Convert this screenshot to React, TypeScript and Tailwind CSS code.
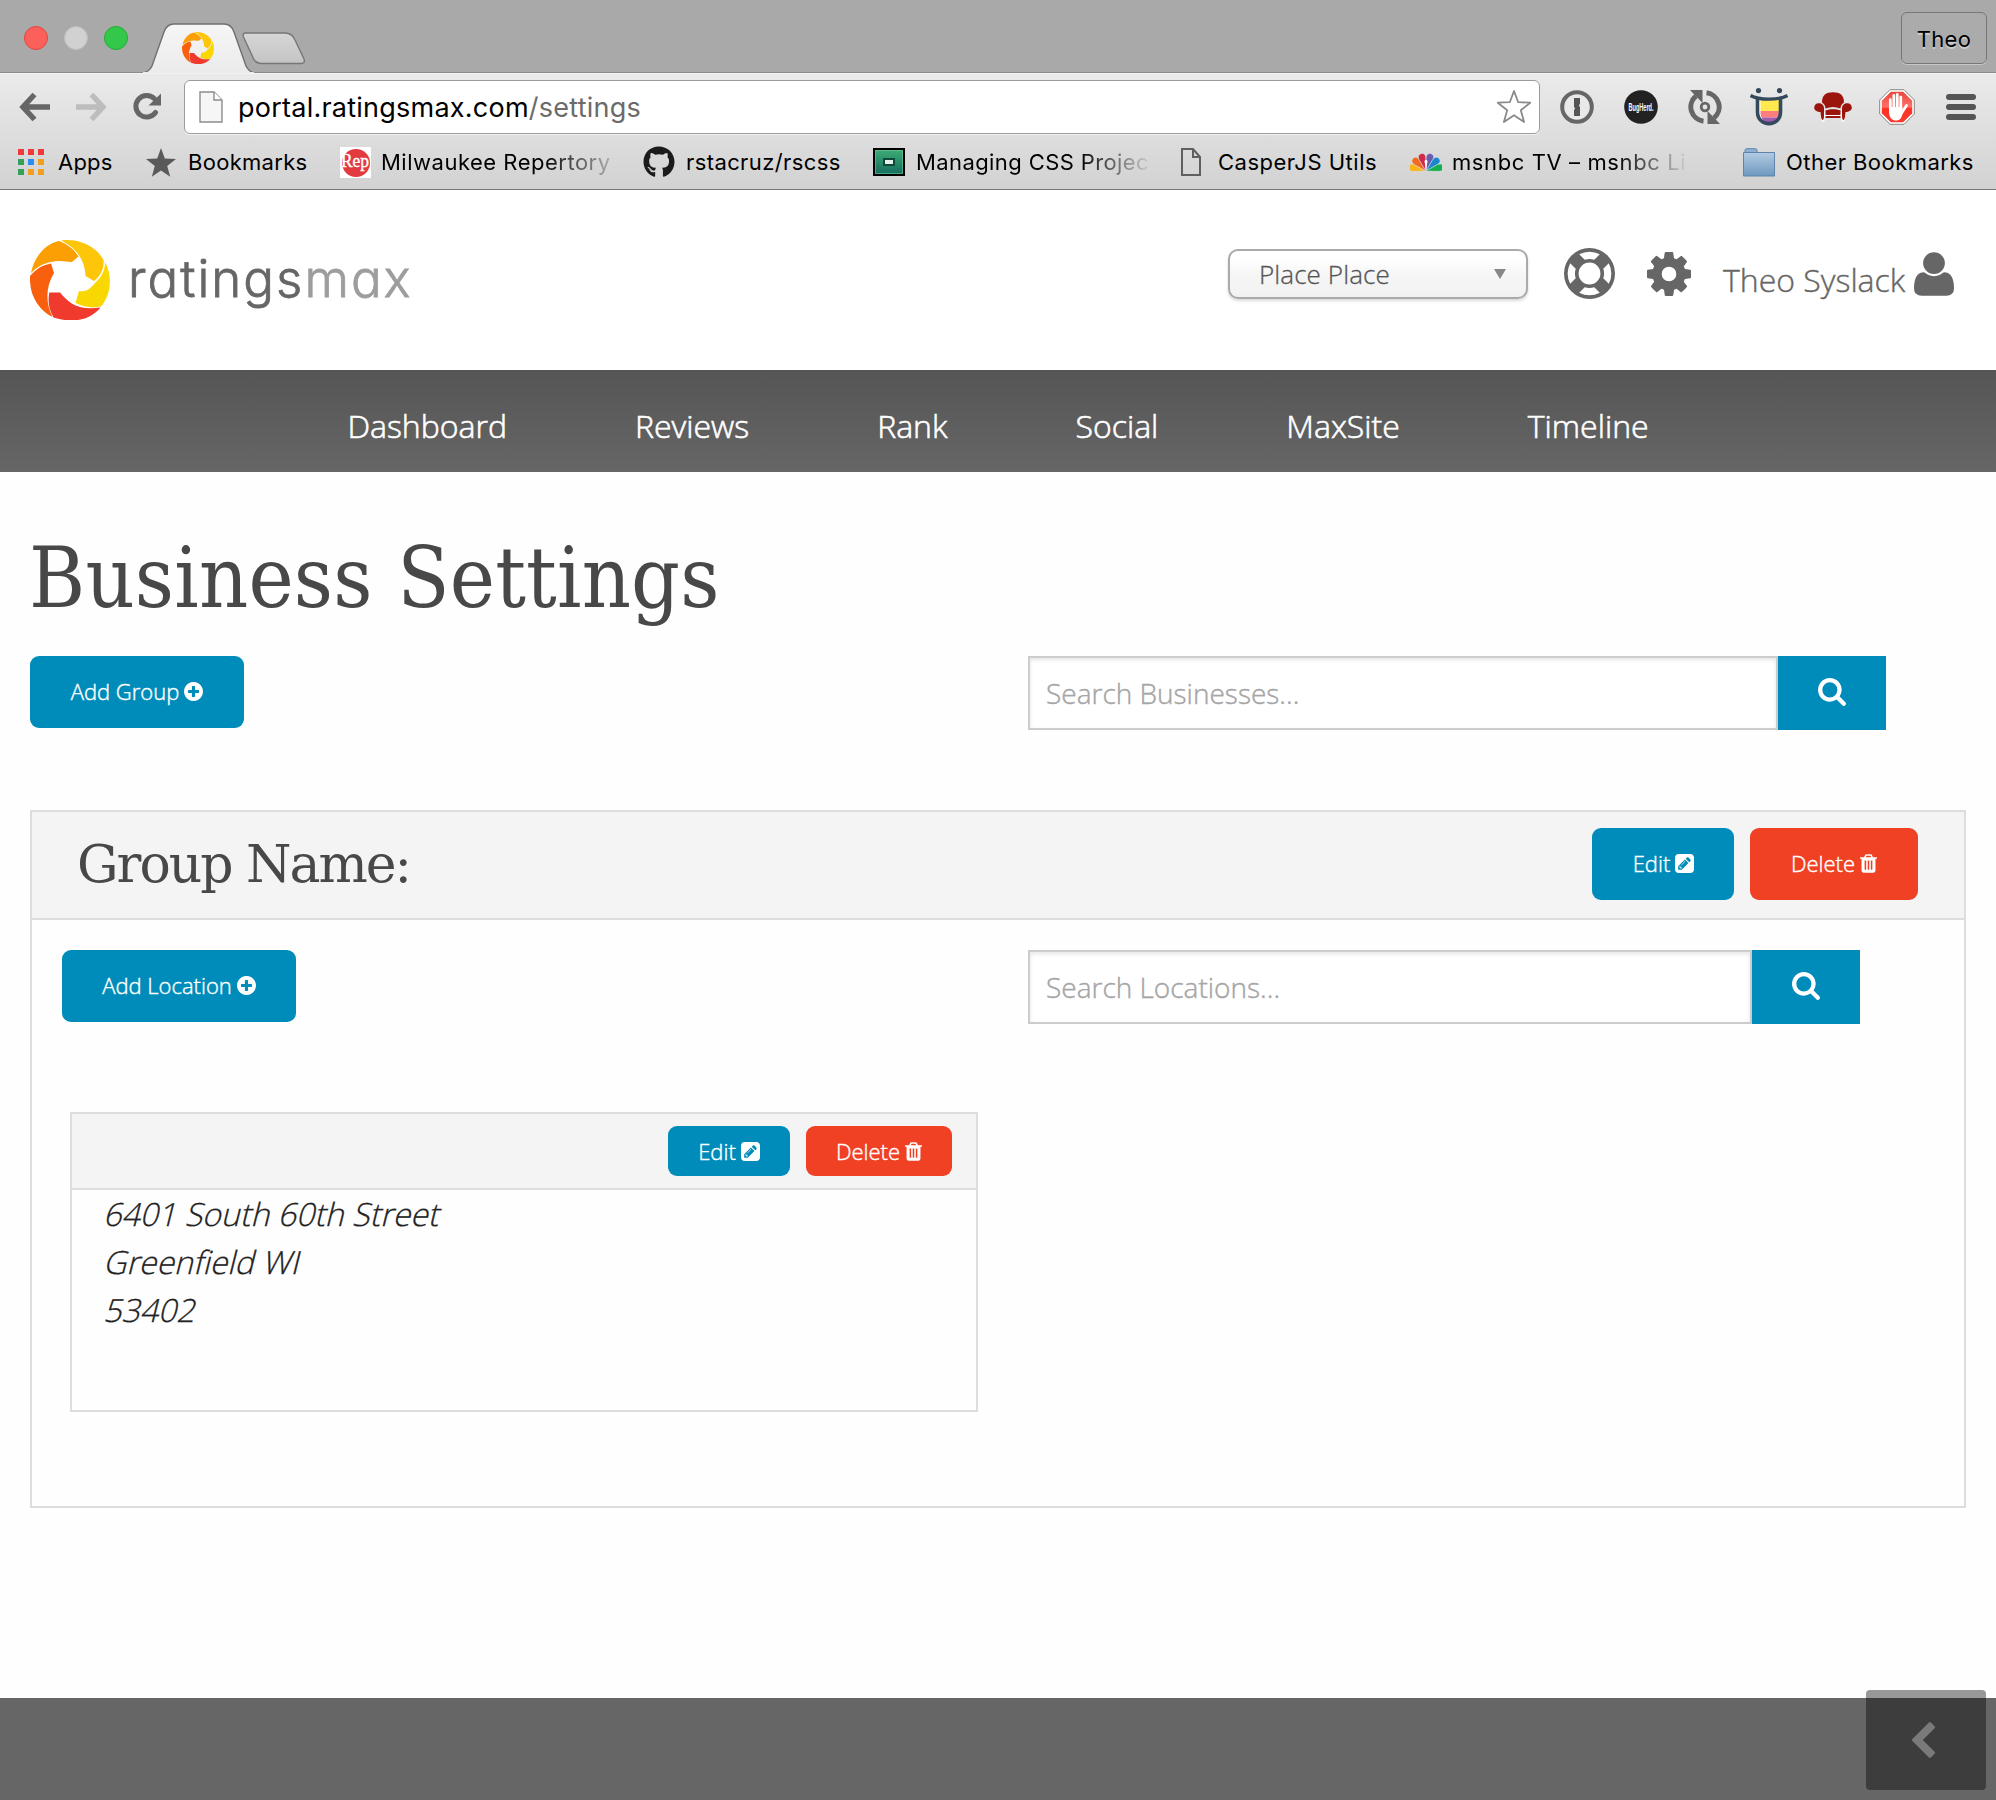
import type { ReactNode } from "react";
import { FaGithub } from "react-icons/fa";

const LIFE_RING =
  "M896 0q182 0 348 71t286 191 191 286 71 348-71 348-191 286-286 191-348 71-348-71-286-191-191-286-71-348 71-348 191-286 286-191 348-71zm0 128q-190 0-361 90l194 194q82-28 167-28t167 28l194-194q-171-90-361-90zm-678 1129l194-194q-28-82-28-167t28-167l-194-194q-90 171-90 361t90 361zm678 407q190 0 361-90l-194-194q-82 28-167 28t-167-28l-194 194q171 90 361 90zm0-384q159 0 271.5-112.5t112.5-271.5-112.5-271.5-271.5-112.5-271.5 112.5-112.5 271.5 112.5 271.5 271.5 112.5zm484-217l194 194q90-171 90-361t-90-361l-194 194q28 82 28 167t-28 167z";
const COG =
  "M1152 896q0-106-75-181t-181-75-181 75-75 181 75 181 181 75 181-75 75-181zm512-109v222q0 12-8 23t-20 13l-185 28q-19 54-39 91 35 50 107 138 10 12 10 25t-9 23q-27 37-99 108t-94 71q-12 0-26-9l-138-108q-44 23-91 38-16 136-29 186-7 28-36 28h-222q-14 0-24.5-8.5t-11.5-21.5l-28-184q-49-16-90-37l-141 107q-10 9-25 9-14 0-25-11-126-114-165-168-7-10-7-23 0-12 8-23 15-21 51-66.5t54-70.5q-27-50-41-99l-183-27q-13-2-21-12.5t-8-23.5v-222q0-12 8-23t19-13l186-28q14-46 39-92-40-57-107-138-10-12-10-24 0-10 9-23 26-36 98.5-107.5t94.5-71.5q13 0 26 10l138 107q44-23 91-38 16-136 29-186 7-28 36-28h222q14 0 24.5 8.5t11.5 21.5l28 184q49 16 90 37l142-107q9-9 24-9 13 0 25 10 129 119 165 170 7 8 7 22 0 12-8 23-15 21-51 66.5t-54 70.5q26 50 41 98l183 28q13 2 21 12.5t8 23.5z";
const USER =
  "M1600 1405q0 120-73 189.5t-194 69.5h-874q-121 0-194-69.5t-73-189.5q0-53 3.5-103.5t14-109 26.5-108.5 43-97.5 62-81 85.5-53.5 111.5-20q9 0 42 21.5t74.5 48 108 48 133.5 21.5 133.5-21.5 108-48 74.5-48 42-21.5q61 0 111.5 20t85.5 53.5 62 81 43 97.5 26.5 108.5 14 109 3.5 103.5zm-320-893q0 159-112.5 271.5t-271.5 112.5-271.5-112.5-112.5-271.5 112.5-271.5 271.5-112.5 271.5 112.5 112.5 271.5z";
const PLUS =
  "M1344 960v-128q0-26-19-45t-45-19h-256v-256q0-26-19-45t-45-19h-128q-26 0-45 19t-19 45v256h-256q-26 0-45 19t-19 45v128q0 26 19 45t45 19h256v256q0 26 19 45t45 19h128q26 0 45-19t19-45v-256h256q26 0 45-19t19-45zm320-64q0 209-103 385.5t-279.5 279.5-385.5 103-385.5-103-279.5-279.5-103-385.5 103-385.5 279.5-279.5 385.5-103 385.5 103 279.5 279.5 103 385.5z";
const SEARCH =
  "M1216 832q0-185-131.5-316.5t-316.5-131.5-316.5 131.5-131.5 316.5 131.5 316.5 316.5 131.5 316.5-131.5 131.5-316.5zm512 832q0 52-38 90t-90 38q-54 0-90-38l-343-342q-179 124-399 124-143 0-273.5-55.5t-225-150-150-225-55.5-273.5 55.5-273.5 150-225 225-150 273.5-55.5 273.5 55.5 225 150 150 225 55.5 273.5q0 220-124 399l343 343q37 37 37 90z";
const PENCIL =
  "M404 1108l152 152-52 52h-56v-96h-96v-56zm414-390q14 13-3 30l-291 291q-17 17-30 3-14-13 3-30l291-291q17-17 30-3zm-274 690l544-544-288-288-544 544v288h288zm608-608l92-92q28-28 28-68t-28-68l-152-152q-28-28-68-28t-68 28l-92 92zm384-384v960q0 119-84.5 203.5t-203.5 84.5h-960q-119 0-203.5-84.5t-84.5-203.5v-960q0-119 84.5-203.5t203.5-84.5h960q119 0 203.5 84.5t84.5 203.5z";
const TRASH =
  "M704 1376v-704q0-14-9-23t-23-9h-64q-14 0-23 9t-9 23v704q0 14 9 23t23 9h64q14 0 23-9t9-23zm256 0v-704q0-14-9-23t-23-9h-64q-14 0-23 9t-9 23v704q0 14 9 23t23 9h64q14 0 23-9t9-23zm256 0v-704q0-14-9-23t-23-9h-64q-14 0-23 9t-9 23v704q0 14 9 23t23 9h64q14 0 23-9t9-23zm-544-992h448l-48-117q-7-9-17-11h-317q-10 2-17 11zm928 32v64q0 14-9 23t-23 9h-96v948q0 83-47 143.5t-113 60.5h-832q-66 0-113-58.5t-47-141.5v-952h-96q-14 0-23-9t-9-23v-64q0-14 9-23t23-9h309l70-167q15-37 54-63t79-26h320q40 0 79 26t54 63l70 167h309q14 0 23 9t9 23z";
const CHEVRON =
  "M1427 301l-531 531 531 531q19 19 19 45t-19 45l-166 166q-19 19-45 19t-45-19l-742-742q-19-19-19-45t19-45l742-742q19-19 45-19t45 19l166 166q19 19 19 45t-19 45z";

function Glyph({ d, box, className }: { d: string; box: string; className: string }) {
  return (
    <svg viewBox={box} className={`shrink-0 ${className}`} fill="currentColor">
      <path d={d} />
    </svg>
  );
}

function Swirl({ className }: { className: string }) {
  return (
    <svg viewBox="0 0 80 80" className={`shrink-0 ${className}`}>
      <path fill="#fb9f04" d="M1 33C4 17 15 4 29 1c8 3 15 8 19.500 15.500L42 22C36 22.500 31 19 17 23 10 25 5 29 1 33z" />
      <path fill="#fdc60b" d="M31 .6C48-2 66 6 73.600 20c.5 8-2 15-9.600 21l-8.500-5C55 21 47 8 31 .6z" />
      <path fill="#f8d800" d="M75 22C82 34 82 53 71.500 66c-8 3-18 1-26-3l3.500-12c7 1 10-1 16.500-8.500C72.500 36 75 30 75 22z" />
      <path fill="#f03a2e" d="M70.500 67.500C61 79.500 44 84 23.500 77.500 18 68 18 60 19.300 52.500H30C38 62 47 71 70.500 67.500z" />
      <path fill="#f8600e" d="M0 36c7-8 13-11 21-12.500l3 9.500C16 46 15 62 22.500 77 9 70-1 56 0 36z" />
    </svg>
  );
}

function TabStrip() {
  return (
    <div className="flex h-[72px] items-start bg-[#a9a9a9]">
      <div className="flex gap-4 pt-[26px] pl-6">
        <span className="size-6 rounded-full border border-[#e2463f] bg-[#fc605b]" />
        <span className="size-6 rounded-full border border-[#bdbdbd] bg-[#d1d1d1]" />
        <span className="size-6 rounded-full border border-[#1fac30] bg-[#34c84a]" />
      </div>
      <div className="relative ml-[14px] h-[73px] w-[170px]">
        <svg width="170" height="73" viewBox="0 0 170 73">
          <defs>
            <linearGradient id="tab" x1="0" y1="0" x2="0" y2="1">
              <stop offset="0" stopColor="#f6f6f6" />
              <stop offset="1" stopColor="#ebebeb" />
            </linearGradient>
            <linearGradient id="newtab" x1="0" y1="0" x2="0" y2="1">
              <stop offset="0" stopColor="#d6d6d6" />
              <stop offset="1" stopColor="#c4c4c4" />
            </linearGradient>
          </defs>
          <path
            d="M1 73c5-1 7-3 9-7L22 32c2-6 5-8 10-8h50c5 0 8 2 10 8l12 34c2 4 4 6 8 7z"
            fill="url(#tab)"
            stroke="#6f6f6f"
            strokeWidth="1.400"
          />
          <path d="M1 73h111" stroke="#ebebeb" strokeWidth="2" />
          <path
            d="M104 33h39c5 0 8 2 10 7l9 19c1 3 0 4.500-3 4.500h-39c-5 0-8-2-9.500-7l-9-19.500c-1-3 0-4 2.500-4z"
            fill="url(#newtab)"
            stroke="#777"
            strokeWidth="1.400"
          />
        </svg>
        <Swirl className="absolute top-8 left-[40px] size-8" />
      </div>
      <div className="mt-3 mr-[9px] ml-auto flex h-[52px] w-[86px] items-center justify-center rounded-md border border-[#777] bg-[#ababab] pt-[3px] font-[Inter] text-[22px] tracking-[0.3px] text-black shadow-[0_1px_0_#c8c8c8] [text-shadow:0_2px_0_#ccc]">
        Theo
      </div>
    </div>
  );
}

function Arrow({ className }: { className: string }) {
  return (
    <svg width="32" height="30" viewBox="0 0 32 30" className={className} fill="none" stroke="currentColor" strokeWidth="5.500" strokeLinejoin="miter">
      <path d="M15.500 2.500 4 15l11.500 12.500M5 15h26" />
    </svg>
  );
}

function Extensions() {
  const cell = "flex w-16 justify-center";
  return (
    <div className="ml-[5px] flex items-center">
      <span className={cell}>
        <svg width="34" height="34" viewBox="0 0 34 34">
          <circle cx="17" cy="17" r="14.800" fill="#e9e9e9" stroke="#666" strokeWidth="4" />
          <path d="M14 8h6v6l-1.200 1.500L20 17v9h-6v-6l1.200-1.500L14 17z" fill="#555" />
        </svg>
      </span>
      <span className={cell}>
        <svg width="34" height="34" viewBox="0 0 34 34">
          <circle cx="17" cy="17" r="16.800" fill="#222" />
          <text x="4.500" y="20.500" textLength="25" lengthAdjust="spacingAndGlyphs" fontSize="10" fontWeight="700" fontFamily="Liberation Sans, sans-serif" fill="#fff">
            BugHerd.
          </text>
        </svg>
      </span>
      <span className={cell}>
        <svg width="34" height="34" viewBox="0 0 34 34">
          <path d="M18.500 2.800A14.300 14.300 0 0 1 26 28M15.500 31.200A14.300 14.300 0 0 1 8 6" fill="none" stroke="#666" strokeWidth="5" />
          <path d="M2 0h12.500v13zM32 34H19.500V21z" fill="#666" />
          <circle cx="17" cy="17" r="3.800" fill="none" stroke="#666" strokeWidth="2.800" />
        </svg>
      </span>
      <span className={cell}>
        <svg width="38" height="38" viewBox="0 0 38 38">
          <circle cx="8.500" cy="2.600" r="2.600" fill="#34495e" />
          <circle cx="29.500" cy="2.600" r="2.600" fill="#34495e" />
          <path d="M7 10v14c0 16 24 16 24 0V10" fill="#fff" />
          <path d="M10.500 11.500H29V23H10.500z" fill="#ffe94e" />
          <path d="M10.500 23H29v3c0 1-.3 2-.6 3.500H11.500C10.700 28 10.500 26 10.500 23z" fill="#ff7d7d" />
          <path d="M11.500 29.500h17C27 33.500 23 35 20 35s-7-1.500-8.500-5.500z" fill="#a05bb0" />
          <path d="M7.500 10v14c0 15.500 23 15.500 23 0V10" fill="none" stroke="#34495e" strokeWidth="3.600" />
          <path d="M.5 7.500C9 12.300 29 12.300 37.500 7.500" fill="none" stroke="#34495e" strokeWidth="3.400" />
        </svg>
      </span>
      <span className={cell}>
        <svg width="38" height="30" viewBox="0 0 38 30">
          <path d="M7.500 29.500V20h23v9.500h-3V26h-17v3.500z" fill="#fff" />
          <path d="M8 10.500C8 3 12 .3 19 .3S30 3 30 10.500c-2.500 1.500-3.500 3.500-3.500 6-5-2-10-2-15 0 0-2.500-1-4.500-3.500-6z" fill="#9c150c" />
          <path d="M11.500 18.500c4.500-1.800 10.500-1.800 15 0V23h-15zM11.500 24h15v2h-15z" fill="#9c150c" />
          <path d="M4.500 11.200c3.500 0 5.500 2 5.500 5.300V24c0 2-.5 4-1.500 4.300C7 27 7 24 6.500 20 3 20 .2 18.500.2 15.800s1.800-4.600 4.300-4.600zM33.500 11.200c-3.500 0-5.500 2-5.500 5.300V24c0 2 .5 4 1.500 4.300C31 27 31 24 31.500 20c3.500 0 6.300-1.500 6.300-4.200s-1.800-4.600-4.300-4.600z" fill="#9c150c" />
        </svg>
      </span>
      <span className={cell}>
        <svg width="36" height="36" viewBox="0 0 36 36">
          <defs>
            <linearGradient id="stop" x1="0" y1="0" x2="0" y2="1">
              <stop offset="0" stopColor="#e8483f" />
              <stop offset=".5" stopColor="#ff7068" />
              <stop offset=".55" stopColor="#ff3126" />
              <stop offset="1" stopColor="#fa3b30" />
            </linearGradient>
          </defs>
          <path d="M11 .7h14L35.300 11v14L25 35.300H11L.7 25V11z" fill="#fff" stroke="#888" strokeWidth="1" />
          <path d="M11.800 2.800h12.400l9 9v12.400l-9 9H11.800l-9-9V11.800z" fill="url(#stop)" />
          <path d="M11.300 10.500V21M14.800 6.300V21M18.300 5.300V21M21.800 8V21M27.500 16.500 22 25" stroke="#fff" strokeWidth="2.700" strokeLinecap="round" fill="none" />
          <path d="M10 18h13.500v5c0 6-3 8.500-6.500 8.500S10 29 10 23z" fill="#fff" />
        </svg>
      </span>
      <span className={cell}>
        <span className="flex w-[30px] flex-col gap-1">
          <i className="h-[6px] rounded-full bg-[#555]" />
          <i className="h-[6px] rounded-full bg-[#555]" />
          <i className="h-[6px] rounded-full bg-[#555]" />
        </span>
      </span>
    </div>
  );
}

function Toolbar() {
  return (
    <div className="flex h-[67px] items-center border-t border-[#f4f4f4]">
      <Arrow className="ml-[19px] text-[#666]" />
      <Arrow className="ml-[24px] rotate-180 text-[#bdbdbd]" />
      <svg width="30" height="30" viewBox="0 0 30 30" className="ml-[26px]" fill="none">
        <path d="M22.500 20.500A10.800 10.800 0 1 1 21.500 6.800" stroke="#666" strokeWidth="5" strokeLinecap="round" />
        <path d="M28 1.500V13.500H15.500z" fill="#666" />
      </svg>
      <div className="ml-[21px] flex h-[54px] w-[1356px] items-center rounded-[6px] border-[1.500px] border-[#9b9b9b] bg-white pr-[7px] pl-[14px] shadow-[0_1px_0_#f2f2f2]">
        <svg width="24" height="32" viewBox="0 0 24 32">
          <path d="M1 1h14l8 8v22H1z" fill="#f6f6f6" stroke="#8d8d8d" strokeWidth="1.400" />
          <path d="M15 1v8h8" fill="#fff" stroke="#8d8d8d" strokeWidth="1.400" />
        </svg>
        <span className="ml-[15px] pt-[3px] font-[Inter] text-[27px] tracking-[0.24px] text-black">
          portal.ratingsmax.com<span className="text-[#6b6b6b]">/settings</span>
        </span>
        <svg width="36" height="36" viewBox="0 0 36 36" className="ml-auto">
          <path
            d="M18 2l4.200 11.200 12 .5-9.400 7.500 3.300 11.800L18 26.200 7.900 33l3.300-11.800-9.400-7.500 12-.5z"
            fill="#fff"
            stroke="#8a8a8a"
            strokeWidth="1.800"
            strokeLinejoin="round"
          />
        </svg>
      </div>
      <Extensions />
    </div>
  );
}

function Bookmark({ width, iconBox, icon, label, tracking }: { width: string; iconBox: string; icon: ReactNode; label: string; tracking: string }) {
  return (
    <div className={`flex shrink-0 items-center ${width}`}>
      <span className={`shrink-0 ${iconBox}`}>{icon}</span>
      <span className={`whitespace-nowrap ${tracking}`}>{label}</span>
    </div>
  );
}

function BookmarksBar() {
  const dots = ["#f03a3a", "#f03a3a", "#f03a3a", "#35a05a", "#2a8df0", "#f0a01e", "#35a05a", "#f0a01e", "#f0a01e"];
  const petals = [
    ["#fbb418", -76],
    ["#f26a22", -46],
    ["#cf2a4a", -16],
    ["#6a5bb0", 16],
    ["#1a86d0", 46],
    ["#12b04e", 76],
  ] as const;
  return (
    <div className="flex h-[44px] items-center pl-[18px] font-[Inter] text-[22px] leading-[30px] text-black">
      <Bookmark
        width="w-[128px]"
        iconBox="w-[40px]"
        tracking="tracking-[0.2px]"
        label="Apps"
        icon={
          <span className="grid w-[26px] grid-cols-3 gap-1">
            {dots.map((c, i) => (
              <i key={i} className="size-[6px]" style={{ backgroundColor: c }} />
            ))}
          </span>
        }
      />
      <Bookmark
        width="w-[194px]"
        iconBox="w-[42px]"
        tracking="tracking-[0.3px]"
        label="Bookmarks"
        icon={
          <svg width="30" height="29" viewBox="0 0 30 29">
            <path d="M15 0l3.800 10.500L30 11l-8.800 7 3 10.800L15 22.600 5.800 28.800l3-10.800L0 11l11.200-.5z" fill="#5a5a5a" />
          </svg>
        }
      />
      <Bookmark
        width="w-[303px]"
        iconBox="w-[41px]"
        tracking="tracking-[0.5px] bg-linear-to-r from-black from-70% to-black/20 bg-clip-text text-transparent"
        label="Milwaukee Repertory"
        icon={
          <svg width="31" height="31" viewBox="0 0 31 31">
            <path d="M0 0h31v31H0z" fill="#fff" />
            <circle cx="16" cy="16" r="14" fill="#e33a3f" />
            <text x="1" y="20" textLength="28" lengthAdjust="spacingAndGlyphs" fontSize="19" fontFamily="Liberation Serif, serif" fill="#fff" stroke="#fff" strokeWidth=".4">
              Rep
            </text>
          </svg>
        }
      />
      <Bookmark width="w-[230px]" iconBox="w-[43px]" tracking="tracking-[0.4px]" label="rstacruz/rscss" icon={<FaGithub className="size-8 text-[#1b1b1b]" />} />
      <Bookmark
        width="w-[308px]"
        iconBox="w-[43px]"
        tracking="tracking-[0.4px] bg-linear-to-r from-black from-70% to-black/5 bg-clip-text text-transparent"
        label="Managing CSS Projec"
        icon={
          <svg width="32" height="28" viewBox="0 0 32 28">
            <defs>
              <linearGradient id="green" x1="0" y1="0" x2="0" y2="1">
                <stop offset="0" stopColor="#3fae76" />
                <stop offset="1" stopColor="#126a5c" />
              </linearGradient>
            </defs>
            <path d="M1 1h30v26H1z" fill="url(#green)" stroke="#000" strokeWidth="2" />
            <path d="M2.500 2.500h27v23h-27z" fill="none" stroke="#6fc79b" strokeOpacity=".6" />
            <path d="M10 10h12v8H10z" fill="#0d4a3a" />
            <path d="M12 12h8v4h-8z" fill="#e6efe9" />
          </svg>
        }
      />
      <Bookmark
        width="w-[229px]"
        iconBox="w-[37px]"
        tracking="tracking-[0.5px]"
        label="CasperJS Utils"
        icon={
          <svg width="20" height="28" viewBox="0 0 20 28" fill="none" stroke="#5f5f5f" strokeWidth="2">
            <path d="M1 1h11l7 8v18H1zM12 1v8h7" />
          </svg>
        }
      />
      <Bookmark
        width="w-[333px]"
        iconBox="w-[42px]"
        tracking="tracking-[0.6px] bg-linear-to-r from-black from-70% to-black/5 bg-clip-text text-transparent"
        label="msnbc TV – msnbc Li"
        icon={
          <svg width="32" height="19" viewBox="0 0 32 19">
            {petals.map(([c, a]) => (
              <path key={c} d="M16 18.500 12.500 5.500C11.800 1 14 0 16 0s4.200 1 3.500 5.500z" fill={c} stroke="#dcdcdc" strokeWidth=".6" transform={`rotate(${a} 16 18)`} />
            ))}
            <path d="M16 18.500 14.500 8c.3-1.500 2.700-1.500 3 0z" fill="#fff" />
          </svg>
        }
      />
      <Bookmark
        width="w-[240px]"
        iconBox="w-[43px]"
        tracking="tracking-[0.45px]"
        label="Other Bookmarks"
        icon={
          <svg width="32" height="29" viewBox="0 0 32 29">
            <defs>
              <linearGradient id="folder" x1="0" y1="0" x2="0" y2="1">
                <stop offset="0" stopColor="#b3cbe2" />
                <stop offset="1" stopColor="#6f98c0" />
              </linearGradient>
            </defs>
            <path d="M2 5V2.500C2 1 3 .7 4 .7h8c1 0 2 .3 2 1.800V5z" fill="#8fb0d0" stroke="#5f84ab" />
            <path d="M.5 4.500h31V28H.5z" fill="url(#folder)" stroke="#5f84ab" />
          </svg>
        }
      />
    </div>
  );
}

function Header() {
  return (
    <header className="flex h-[180px] items-start bg-white pr-[42px] pl-[30px] text-[#666]">
      <div className="flex pt-[50px]">
        <Swirl className="size-20" />
        <span className="ml-[18px] pt-[8px] font-[Inter] text-[51px] leading-[62px] font-light tracking-[2px] text-[#666] [-webkit-text-stroke:0.8px] [font-feature-settings:'cv11']">
          ratings<span className="text-[#9d9d9d]">max</span>
        </span>
      </div>
      <div className="mt-[58px] ml-auto flex h-[51px] items-center">
        <div className="flex h-[50px] w-[300px] items-center justify-between rounded-[10px] border-2 border-[#aaa] bg-linear-to-b from-white from-20% via-[#f6f6f6] via-50% to-[#f2f2f2] pr-5 pl-[29px] font-['Open_Sans'] text-[26px] font-light tracking-[0.1px] text-[#555] shadow-[0_2px_3px_rgba(0,0,0,0.15)] [-webkit-text-stroke:0.3px]">
          <span className="pt-[2px]">Place Place</span>
          <svg width="12" height="10" viewBox="0 0 12 10">
            <path d="M0 0h12L6 10z" fill="#888" />
          </svg>
        </div>
        <Glyph d={LIFE_RING} box="0 0 1792 1792" className="ml-9 size-[51px]" />
        <Glyph d={COG} box="128 128 1536 1536" className="ml-8 size-11" />
        <span className="ml-8 w-[191px] pt-3 font-['Open_Sans'] text-[32px] leading-[44px] font-light whitespace-nowrap [-webkit-text-stroke:0.4px]">Theo Syslack</span>
        <Glyph d={USER} box="192 128 1408 1536" className="h-11 w-10" />
      </div>
    </header>
  );
}

function Nav() {
  return (
    <nav className="flex h-[102px] items-center justify-center gap-[128px] bg-linear-to-b from-[#555] to-[#666] pt-[10px] font-['Open_Sans'] text-[32px] font-light text-white [-webkit-text-stroke:0.6px]">
      {["Dashboard", "Reviews", "Rank", "Social", "MaxSite", "Timeline"].map((t) => (
        <a key={t}>{t}</a>
      ))}
    </nav>
  );
}

function Button({ label, icon, className }: { label: string; icon: "plus" | "pencil" | "trash"; className: string }) {
  return (
    <button className={`flex shrink-0 items-center justify-center rounded-[9px] font-['Open_Sans'] text-[22px] leading-[30px] font-light text-white ${className}`}>
      <span className="mr-[5px] [-webkit-text-stroke:0.4px]">{label}</span>
      {icon === "plus" && <Glyph d={PLUS} box="128 128 1536 1536" className="size-[19px]" />}
      {icon === "pencil" && <Glyph d={PENCIL} box="0 128 1536 1536" className="size-[19px]" />}
      {icon === "trash" && <Glyph d={TRASH} box="192 128 1408 1536" className="h-[19px] w-[17px]" />}
    </button>
  );
}

function SearchBox({ placeholder, className }: { placeholder: string; className: string }) {
  return (
    <div className={`ml-auto flex h-[74px] ${className}`}>
      <div className="flex flex-1 items-center border-2 border-[#ccc] bg-white pl-4 font-['Open_Sans'] text-[28px] font-light text-[#a5a5a5] shadow-[inset_0_2px_4px_rgba(0,0,0,0.1)] [-webkit-text-stroke:0.4px]">
        {placeholder}
      </div>
      <button className="flex w-[108px] items-center justify-center bg-[#008cba] pb-[2px] text-white">
        <Glyph d={SEARCH} box="64 128 1664 1664" className="size-7" />
      </button>
    </div>
  );
}

const blue = "bg-[#008cba]";
const red = "bg-[#f04124]";

export default function App() {
  return (
    <div className="relative flex h-[1800px] w-[1996px] flex-col overflow-hidden bg-[#fefefe]">
      <TabStrip />
      <div className="h-[118px] border-t border-b border-t-[#8b8b8b] border-b-[#777] bg-linear-to-b from-[#ebebeb] to-[#d2d2d2]">
        <Toolbar />
        <BookmarksBar />
      </div>
      <Header />
      <Nav />
      <main className="px-[30px] pt-14">
        <h1 className="-ml-px font-['DejaVu_Serif_Condensed'] text-[85px] leading-[100px] tracking-[0.2px] text-[#484848]">Business Settings</h1>
        <div className="mt-7 flex items-start">
          <Button label="Add Group" icon="plus" className={`h-[72px] w-[214px] pb-[2px] ${blue}`} />
          <SearchBox placeholder="Search Businesses..." className="mr-20 w-[858px]" />
        </div>
        <section className="mt-20 h-[698px] border-2 border-[#ddd]">
          <div className="flex h-[108px] items-start border-b-2 border-[#ddd] bg-[#f4f4f4] pt-4 pr-[46px] pl-[45px]">
            <h2 className="font-['DejaVu_Serif'] text-[52px] leading-[72px] tracking-[-2px] text-[#484848]">Group Name:</h2>
            <Button label="Edit" icon="pencil" className={`ml-auto h-[72px] w-[142px] pb-[2px] pl-px ${blue}`} />
            <Button label="Delete" icon="trash" className={`ml-4 h-[72px] w-[168px] pb-[2px] ${red}`} />
          </div>
          <div className="flex items-start pt-[30px] pr-[104px] pl-[30px]">
            <Button label="Add Location" icon="plus" className={`h-[72px] w-[234px] pb-[2px] ${blue}`} />
            <SearchBox placeholder="Search Locations..." className="w-[832px]" />
          </div>
          <article className="mt-[88px] ml-[38px] h-[300px] w-[908px] border-2 border-[#ddd]">
            <div className="flex h-[76px] items-start justify-end gap-4 border-b-2 border-[#ddd] bg-[#f4f4f4] pt-3 pr-6">
              <Button label="Edit" icon="pencil" className={`h-[50px] w-[122px] ${blue}`} />
              <Button label="Delete" icon="trash" className={`h-[50px] w-[146px] ${red}`} />
            </div>
            <address className="pl-[31px] font-['Open_Sans'] text-[32px] leading-[48px] font-light text-[#222] not-italic [-webkit-text-stroke:0.3px]">
              {["6401 South 60th Street", "Greenfield WI", "53402"].map((line) => (
                <span key={line} className="block origin-[0_36px] -skew-x-[14deg]">
                  {line}
                </span>
              ))}
            </address>
          </article>
        </section>
      </main>
      <footer className="mt-auto h-[102px] bg-[#666]" />
      <button className="absolute right-[10px] bottom-[10px] flex h-[100px] w-[120px] items-center justify-center rounded-[4px] bg-black/40 pr-[6px] text-[#7a7a7a]">
        <Glyph d={CHEVRON} box="410 26 1036 1612" className="h-9 w-[23px]" />
      </button>
    </div>
  );
}
